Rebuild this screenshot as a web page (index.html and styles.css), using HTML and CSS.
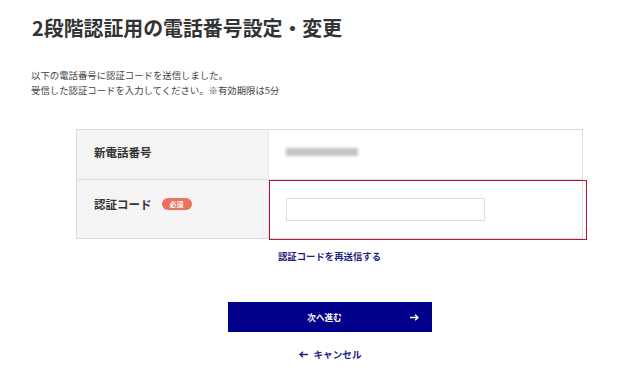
FILE: index.html
```html
<!DOCTYPE html>
<html lang="ja">
<head>
<meta charset="utf-8">
<link rel="stylesheet" href="styles.css">
</head>
<body>
<div class="page">
  <h1 class="title">2段階認証用の電話番号設定・変更</h1>
  <p class="lead">以下の電話番号に認証コードを送信しました。<br>受信した認証コードを入力してください。※有効期限は5分</p>
  <div class="form">
    <div class="table">
      <div class="row row-first">
        <div class="label">新電話番号</div>
        <div class="value"><div class="blurred"></div></div>
      </div>
      <div class="row row-second">
        <div class="label">認証コード<span class="badge">必須</span></div>
        <div class="value value-error"><input class="code-input" type="text"></div>
      </div>
    </div>
    <a class="resend" href="#">認証コードを再送信する</a>
    <button class="next" type="button">
      <span>次へ進む</span>
      <svg class="next-arrow" width="9" height="7" viewBox="0 0 9 7"><path d="M0 3.5H7.5M5 0.8L8 3.5L5 6.2" fill="none" stroke="#fff" stroke-width="1.4"/></svg>
    </button>
    <a class="cancel" href="#">
      <svg class="cancel-arrow" width="9" height="7" viewBox="0 0 9 7"><path d="M9 3.5H1.5M4 0.8L1 3.5L4 6.2" fill="none" stroke="#1b237d" stroke-width="1.4"/></svg>
      <span>キャンセル</span>
    </a>
  </div>
</div>
</body>
</html>
```
FILE: styles.css
```css
* { box-sizing: border-box; }
html, body {
  margin: 0;
  padding: 0;
  background: #fff;
}
body {
  font-family: "Noto Sans CJK JP", "Noto Sans", sans-serif;
  color: #333;
}
.page {
  width: 630px;
  height: 376px;
  overflow: hidden;
}
.title {
  margin: 14px 0 0 32px;
  font-size: 19.9px;
  line-height: 28px;
  font-weight: 700;
  color: #333;
}
.lead {
  margin: 26px 0 0 31px;
  font-size: 9.4px;
  line-height: 15px;
  color: #444;
}
.form {
  width: 507px;
  margin: 31px 0 0 76px;
  display: flex;
  flex-direction: column;
  align-items: center;
}
.table {
  width: 507px;
  border: 1px solid #dcdcdc;
  border-bottom: none;
}
.row {
  display: flex;
  border-bottom: 1px solid #dcdcdc;
}
.row-first { height: 50px; }
.row-second { height: 59px; }
.label {
  width: 192px;
  flex: none;
  background: #f4f4f4;
  border-right: 1px solid #e6e6e6;
  display: flex;
  align-items: center;
  padding-left: 17px;
  padding-bottom: 6px;
  font-size: 11.5px;
  font-weight: 700;
  color: #333;
}
.row-second .label { padding-bottom: 10px; }
.badge {
  margin-left: 10px;
  display: inline-flex;
  align-items: center;
  justify-content: center;
  width: 30px;
  height: 12px;
  border-radius: 6px;
  background: #e8725c;
  color: #fff;
  font-size: 7px;
  font-weight: 700;
  line-height: 1;
}
.value {
  flex: 1;
  display: flex;
  align-items: center;
  padding-left: 17px;
  position: relative;
}
.value-error::after {
  content: "";
  position: absolute;
  top: 0;
  left: 0;
  right: -5px;
  bottom: -2px;
  border: 1px solid #c8102e;
  pointer-events: none;
}
.blurred {
  width: 72px;
  height: 8px;
  margin-bottom: 6px;
  background: #c4c4c4;
  filter: blur(1.6px);
}
.code-input {
  width: 199px;
  height: 23px;
  border: 1px solid #dedede;
  background: #fff;
  margin: 0;
  padding: 0 6px;
  outline: none;
}
.resend {
  margin-top: 9px;
  font-size: 9.4px;
  line-height: 16px;
  font-weight: 700;
  color: #1b237d;
  text-decoration: none;
}
.next {
  margin-top: 38px;
  width: 204px;
  height: 30px;
  border: none;
  background: #00008a;
  color: #fff;
  font-family: inherit;
  font-size: 8.6px;
  font-weight: 700;
  position: relative;
  display: flex;
  align-items: center;
  justify-content: center;
  padding: 0;
  cursor: pointer;
}
.next span { margin-left: -10px; }
.next-arrow {
  position: absolute;
  right: 13px;
  top: 12px;
}
.cancel {
  margin-top: 14px;
  display: flex;
  align-items: center;
  gap: 6px;
  font-size: 9.6px;
  line-height: 16px;
  font-weight: 700;
  color: #1b237d;
  text-decoration: none;
  margin-left: 1px;
}
```
